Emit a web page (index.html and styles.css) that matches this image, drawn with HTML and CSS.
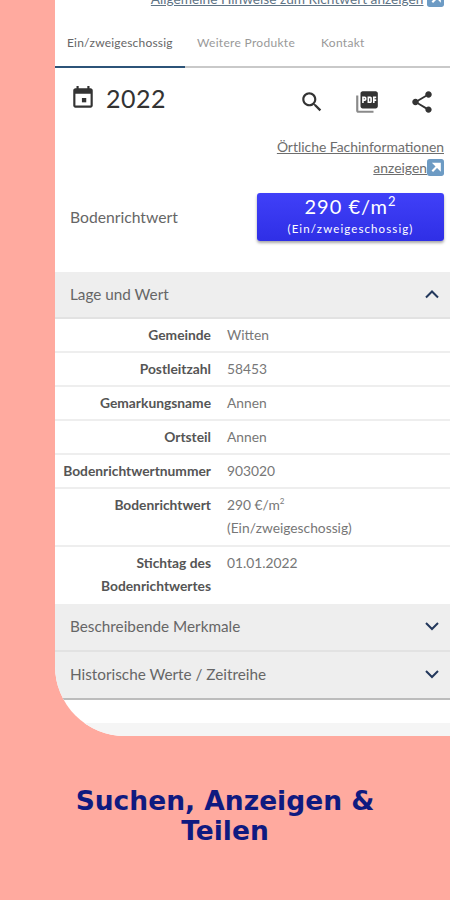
FILE: index.html
```html
<!DOCTYPE html>
<html lang="de">
<head>
    <meta charset="UTF-8">
    <title>Bodenrichtwert</title>
    <link rel="stylesheet" href="styles.css">
</head>
<body>
    <div class="phone">
        <div class="top-link">
            <a>Allgemeine Hinweise zum Richtwert anzeigen</a>
            <svg class="ext" viewBox="0 0 16 16"><rect width="16" height="16" rx="2.5" fill="#6d9bc4"/><path d="M5 11.5 11 5.5M7 4.500h5v5z" stroke="#fff" stroke-width="2" fill="#fff"/></svg>
        </div>

        <div class="tabs">
            <div class="tab active">Ein/zweigeschossig</div>
            <div class="tab">Weitere Produkte</div>
            <div class="tab">Kontakt</div>
        </div>

        <div class="title-row">
            <svg class="cal" viewBox="0 0 24 24"><path d="M16 1v2H8V1H6v2H5c-1.100 0-2 .9-2 2v14c0 1.100.9 2 2 2h14c1.100 0 2-.9 2-2V5c0-1.100-.9-2-2-2h-1V1h-2zm3 18H5V8h14v11z" fill="#333"/><rect x="11" y="12" width="4" height="4" fill="#333"/></svg>
            <span class="year">2022</span>
            <div class="actions">
                <svg viewBox="0 0 24 24"><path d="M15.500 14h-.79l-.28-.27C15.410 12.590 16 11.110 16 9.500 16 5.910 13.090 3 9.500 3S3 5.910 3 9.500 5.910 16 9.500 16c1.610 0 3.090-.59 4.230-1.570l.27.28v.79l5 4.990L20.490 19l-4.990-5zm-6 0C7.010 14 5 11.990 5 9.500S7.010 5 9.500 5 14 7.010 14 9.500 11.990 14 9.500 14z" fill="#333"/></svg>
                <svg viewBox="0 0 24 24"><path d="M4 6H2v14c0 1.100.9 2 2 2h14v-2H4V6z" fill="#8a8a8a"/><path d="M20 2H8c-1.100 0-2 .9-2 2v12c0 1.100.9 2 2 2h12c1.100 0 2-.9 2-2V4c0-1.100-.9-2-2-2zm-8.500 7.500c0 .83-.67 1.500-1.500 1.500H9v2H7.500V7H10c.83 0 1.500.67 1.500 1.500v1zm5 2c0 .83-.67 1.500-1.500 1.500h-2.500V7H15c.83 0 1.500.67 1.500 1.500v3zm4-3H19v1h1.500V11H19v2h-1.500V7h3v1.500zM9 9.500h1v-1H9v1zm5 2h1v-3h-1v3z" fill="#333"/></svg>
                <svg viewBox="0 0 24 24"><path d="M18 16.080c-.76 0-1.440.3-1.960.77L8.910 12.700c.05-.23.09-.46.09-.7s-.04-.47-.09-.7l7.050-4.110c.54.5 1.250.81 2.040.81 1.660 0 3-1.340 3-3s-1.340-3-3-3-3 1.340-3 3c0 .24.04.47.09.7L8.040 9.810C7.500 9.310 6.790 9 6 9c-1.660 0-3 1.340-3 3s1.340 3 3 3c.79 0 1.500-.31 2.040-.81l7.120 4.160c-.05.21-.08.43-.08.65 0 1.610 1.310 2.920 2.920 2.920 1.610 0 2.920-1.310 2.920-2.920s-1.310-2.920-2.920-2.920z" fill="#333"/></svg>
            </div>
        </div>

        <div class="info-links">
            <div><a>Örtliche Fachinformationen</a></div>
            <div><a>anzeigen</a><svg class="ext" viewBox="0 0 16 16"><rect width="16" height="16" rx="2.500" fill="#6d9bc4"/><path d="M5 11.500 11 5.500M7 4.500h5v5z" stroke="#fff" stroke-width="2" fill="#fff"/></svg></div>
        </div>

        <div class="value-row">
            <span class="value-label">Bodenrichtwert</span>
            <div class="value-btn">
                <div class="price">290 €/m<sup>2</sup></div>
                <div class="price-sub">(Ein/zweigeschossig)</div>
            </div>
        </div>

        <div class="acc-head open">
            <span>Lage und Wert</span>
            <svg viewBox="0 0 24 24"><path d="M6 15.500l6-6 6 6" class="chev"/></svg>
        </div>
        <div class="row"><div class="key">Gemeinde</div><div class="val">Witten</div></div>
        <div class="row"><div class="key">Postleitzahl</div><div class="val">58453</div></div>
        <div class="row"><div class="key">Gemarkungsname</div><div class="val">Annen</div></div>
        <div class="row"><div class="key">Ortsteil</div><div class="val">Annen</div></div>
        <div class="row"><div class="key">Bodenrichtwertnummer</div><div class="val">903020</div></div>
        <div class="row tall"><div class="key">Bodenrichtwert</div><div class="val">290 €/m<sup>2</sup><br>(Ein/zweigeschossig)</div></div>
        <div class="row tall last"><div class="key">Stichtag des Bodenrichtwertes</div><div class="val">01.01.2022</div></div>

        <div class="acc-head">
            <span>Beschreibende Merkmale</span>
            <svg viewBox="0 0 24 24"><path d="M6 9l6 6 6-6" class="chev"/></svg>
        </div>
        <div class="acc-head end">
            <span>Historische Werte / Zeitreihe</span>
            <svg viewBox="0 0 24 24"><path d="M6 9l6 6 6-6" class="chev"/></svg>
        </div>
        <div class="foot"></div>
    </div>

    <h1 class="caption">Suchen, Anzeigen &amp; Teilen</h1>
</body>
</html>
```

FILE: styles.css
```css
body {
    margin: 0;
    background: #ffaa9f;
    font-family: Lato, "Liberation Sans", sans-serif;
    color: #555;
    height: 900px;
    overflow: hidden;
}

.phone {
    margin-left: 55px;
    height: 736px;
    background: #fff;
    border-bottom-left-radius: 70px;
    overflow: hidden;
    position: relative;
}

a {
    text-decoration: underline;
}

.ext {
    width: 17px;
    height: 17px;
    vertical-align: -3px;
}

.top-link {
    margin-top: -10px;
    height: 30px;
    padding-right: 6px;
    text-align: right;
    font-size: 13.700px;
    line-height: 16px;
    color: #5f7486;
}

.tabs {
    display: flex;
    height: 46px;
    border-bottom: 2px solid #c9c9c9;
    margin-bottom: -1px;
    font-size: 12px;
    letter-spacing: 0.3px;
}

.tab {
    padding: 0 12px;
    line-height: 46px;
    color: #999;
}

.tab.active {
    width: 106px;
    color: #666;
    margin-bottom: -2px;
    border-bottom: 2px solid #2c5378;
    letter-spacing: 0.2px;
}

.tab + .tab + .tab {
    padding-left: 14px;
}

.title-row {
    display: flex;
    align-items: center;
    height: 62px;
    padding: 0 15px 0 15px;
}

.cal {
    width: 26px;
    height: 26px;
    margin-right: 10px;
}

.year {
    font-size: 25px;
    color: #333;
    letter-spacing: 0.5px;
}

.actions {
    margin-left: auto;
    margin-top: 7px;
    display: flex;
    gap: 29px;
}

.actions svg {
    width: 26px;
    height: 26px;
}

.info-links {
    padding: 7px 6px 0 0;
    text-align: right;
    font-size: 13.900px;
    line-height: 21px;
    color: #6d6d6d;
}

.value-row {
    display: flex;
    justify-content: space-between;
    align-items: center;
    padding: 15px 6px 0 15px;
}

.value-label {
    font-size: 15.700px;
    color: #666;
}

.value-btn {
    width: 187px;
    height: 48px;
    box-sizing: border-box;
    padding-top: 1px;
    border-radius: 3px;
    background: linear-gradient(#4040f8, #2f2fe6);
    box-shadow: 0 2px 3px rgba(0, 0, 0, 0.35);
    color: #fff;
    text-align: center;
}

.price {
    font-size: 20px;
    line-height: 25px;
    letter-spacing: 1px;
}

.price sup {
    font-size: 13px;
    line-height: 0;
}

.price-sub {
    margin-top: 2px;
    font-size: 11.500px;
    line-height: 16px;
    letter-spacing: 1.100px;
}

.acc-head {
    display: flex;
    justify-content: space-between;
    align-items: center;
    height: 44px;
    padding: 0 6px 2px 15px;
    background: #eeeeee;
    border-bottom: 2px solid #e2e2e2;
    font-size: 15.300px;
    color: #666;
}

.acc-head svg {
    width: 24px;
    height: 24px;
}

.acc-head.end {
    border-bottom-color: #bcbcbc;
}

.acc-head.open {
    margin-top: 31px;
    height: 43px;
}

.chev {
    fill: none;
    stroke: #23385c;
    stroke-width: 2;
}

.row {
    display: grid;
    grid-template-columns: 156px 1fr;
    column-gap: 16px;
    min-height: 32px;
    border-bottom: 2px solid #eeeeee;
    font-size: 13.800px;
    line-height: 32px;
}

.row.tall {
    padding-top: 4px;
    line-height: 23px;
    box-sizing: border-box;
    min-height: 58px;
}

.row.tall.last {
    min-height: 57px;
    border-bottom: 0;
}

.key {
    text-align: right;
    font-weight: 700;
    color: #555;
}

.val {
    color: #777;
}

.val sup {
    font-size: 8px;
    line-height: 0;
}

.foot {
    height: 23px;
    border-bottom: 13px solid #f5f5f5;
}

.caption {
    width: 340px;
    margin: 50px auto 0;
    text-align: center;
    font-family: "DejaVu Sans", sans-serif;
    font-size: 26.500px;
    font-weight: 700;
    line-height: 30px;
    color: #0f1a80;
}
```
